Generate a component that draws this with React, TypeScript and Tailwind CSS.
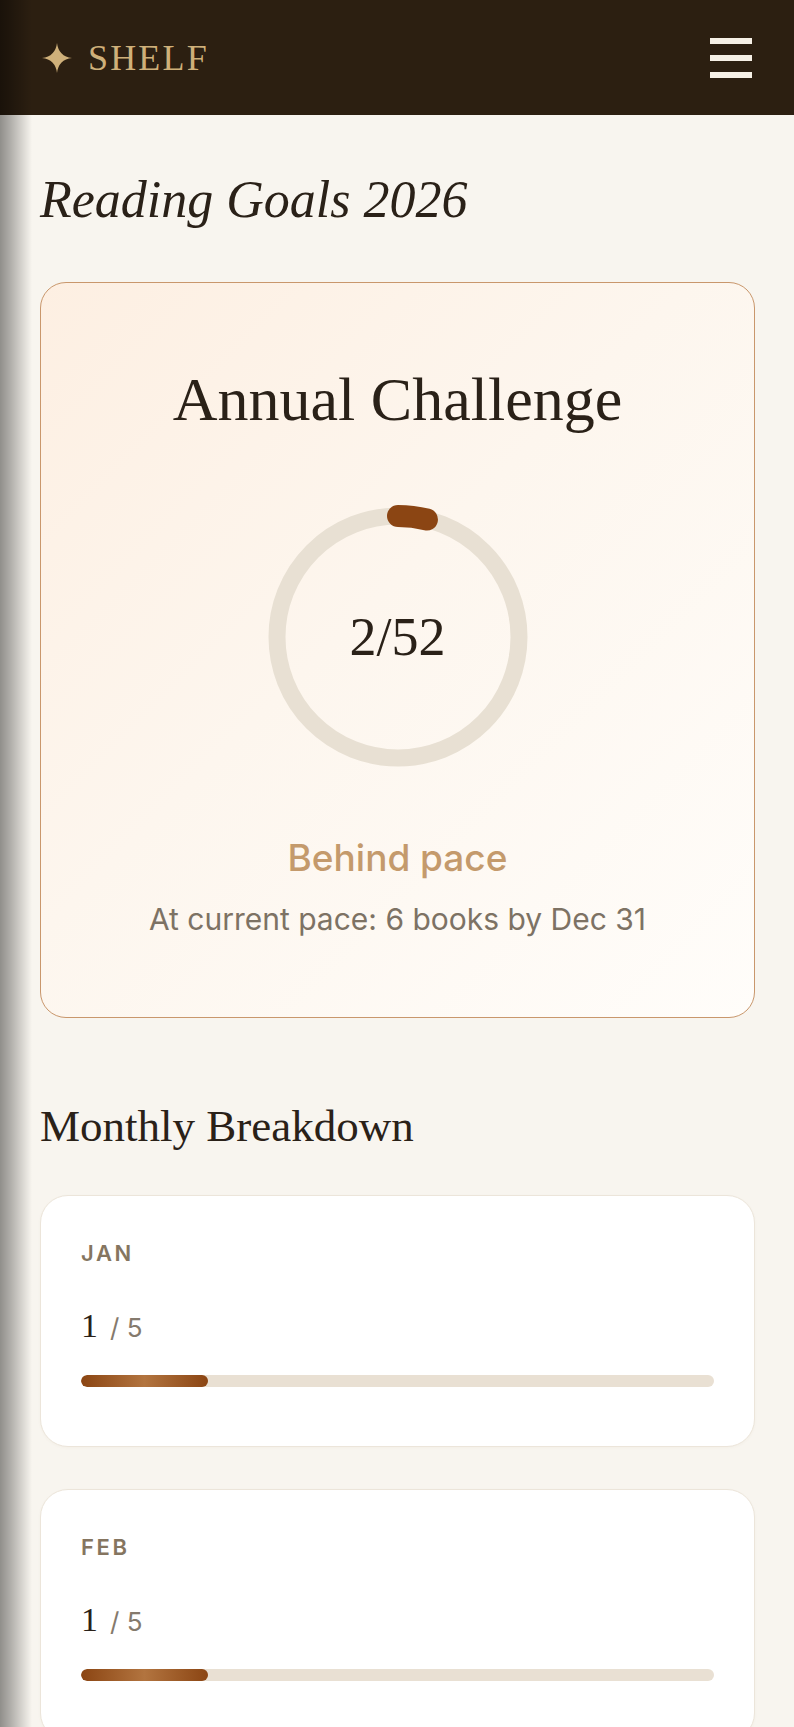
import React from "react";

const serif = "font-['Liberation_Serif','Times_New_Roman',serif]";
const sans = "font-['Inter','Liberation_Sans',sans-serif]";

function Star() {
  return (
    <svg width="30" height="30" viewBox="0 0 30 30" aria-hidden="true">
      <path d="M15 0 Q16.6 13.4 30 15 Q16.6 16.6 15 30 Q13.4 16.6 0 15 Q13.4 13.4 15 0Z" fill="#cfb07a" />
    </svg>
  );
}

function Ring({ done, goal }: { done: number; goal: number }) {
  const size = 264;
  const c = size / 2;
  const r = 121;
  const circ = 2 * Math.PI * r;
  const len = (done / goal) * circ;
  return (
    <div className="relative w-[264px] h-[264px]">
      <svg width={size} height={size} viewBox={`0 0 ${size} ${size}`}>
        <circle cx={c} cy={c} r={r} fill="none" stroke="#e8e0d3" strokeWidth="17" />
        <circle
          cx={c}
          cy={c}
          r={r}
          fill="none"
          stroke="#8b4513"
          strokeWidth="22"
          strokeLinecap="round"
          strokeDasharray={`${len} ${circ}`}
          transform={`rotate(-90 ${c} ${c})`}
        />
      </svg>
      <div className="absolute inset-0 flex items-center justify-center">
        <span className={`${serif} text-[54px] leading-none text-[#2a2118]`}>
          {done}/{goal}
        </span>
      </div>
    </div>
  );
}

function MonthCard({ month, done, goal }: { month: string; done: number; goal: number }) {
  const pct = (done / goal) * 100;
  return (
    <div className="rounded-[28px] border border-[#ece5da] bg-white px-[40px] pt-[40px] pb-[59px] shadow-[0_1px_3px_rgba(120,90,50,0.04)]">
      <div className={`${sans} text-[22px] leading-[34px] font-semibold tracking-[0.12em] text-[#857560]`}>{month}</div>
      <div className="mt-[33px] flex items-baseline py-[2px]">
        <span className={`${serif} text-[34px] leading-[42px] text-[#2a2118]`}>{done}</span>
        <span className={`${sans} text-[26px] leading-[42px] text-[#857a6d] ml-[12px]`}>/ {goal}</span>
      </div>
      <div className="mt-[24px] h-[12px] w-full rounded-full bg-[#e9e0d3] overflow-hidden">
        <div
          className="h-full rounded-full bg-[linear-gradient(90deg,#8b4513_0%,#b2743f_50%,#8b4513_100%)]"
          style={{ width: `${pct}%` }}
        />
      </div>
    </div>
  );
}

export default function App() {
  return (
    <div className="relative h-[1727px] w-full overflow-hidden bg-[#f8f5ef]">
      <header className="h-[115px] bg-[#2c1f11] flex items-center justify-between pl-[42px] pr-[42px]">
        <div className="flex items-center gap-[16px]">
          <Star />
          <span className={`${serif} text-[36px] leading-none tracking-[0.06em] text-[#cfb07a]`}>SHELF</span>
        </div>
        <div className="flex flex-col gap-[11px] w-[42px]">
          <span className="block h-[6px] w-full bg-[#f6f0e6]" />
          <span className="block h-[6px] w-full bg-[#f6f0e6]" />
          <span className="block h-[6px] w-full bg-[#f6f0e6]" />
        </div>
      </header>

      <main className="pl-[40px] pr-[39px]">
        <h1 className={`${serif} italic text-[52px] leading-[62px] mt-[54px] text-[#2a2118]`}>Reading Goals 2026</h1>

        <section className="mt-[51px] rounded-[26px] border-[1.5px] border-[#c9976c] bg-[linear-gradient(135deg,#fdefe2_0%,#fdf6ee_45%,#fffdfa_100%)] pt-[80px] pb-[80px] flex flex-col items-center">
          <h2 className={`${serif} text-[62px] leading-[72px] text-[#2a2118]`}>Annual Challenge</h2>
          <div className="mt-[70px]">
            <Ring done={2} goal={52} />
          </div>
          <div className={`${sans} mt-[66px] text-[37px] leading-[46px] font-medium text-[#c49a6c]`}>Behind pace</div>
          <div className={`${sans} mt-[20px] text-[30px] leading-[36px] text-[#7d7264]`}>At current pace: 6 books by Dec 31</div>
        </section>

        <h2 className={`${serif} text-[45px] leading-[54px] mt-[81px] text-[#2a2118]`}>Monthly Breakdown</h2>

        <div className="mt-[42px] flex flex-col gap-[42px]">
          <MonthCard month="JAN" done={1} goal={5} />
          <MonthCard month="FEB" done={1} goal={5} />
        </div>
      </main>

      <div className="pointer-events-none absolute left-0 top-0 h-full w-[32px] bg-[linear-gradient(90deg,rgba(0,0,0,0.42)_0%,rgba(0,0,0,0.3)_30%,rgba(0,0,0,0)_100%)]" />
    </div>
  );
}
